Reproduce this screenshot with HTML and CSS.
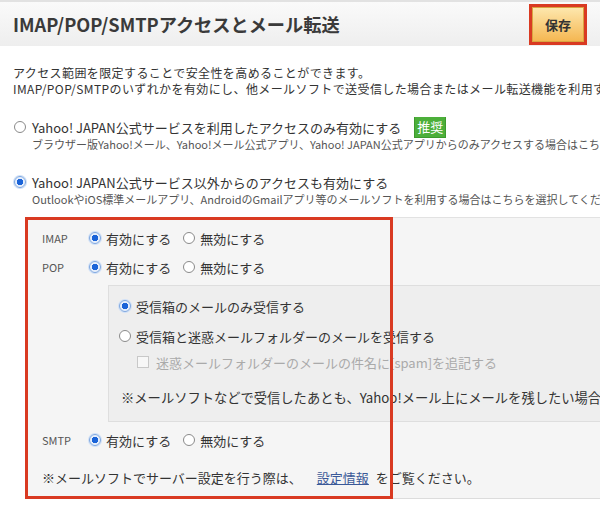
FILE: index.html
```html
<!DOCTYPE html>
<html lang="ja">
<head>
<meta charset="utf-8">
<title>IMAP/POP/SMTPアクセスとメール転送</title>
<link rel="stylesheet" href="styles.css">
</head>
<body>
<div class="page">
  <header class="head">
    <h1 class="title">IMAP/POP/SMTPアクセスとメール転送</h1>
    <button class="save">保存</button>
  </header>

  <p class="intro">アクセス範囲を限定することで安全性を高めることができます。<br>IMAP/POP/SMTPのいずれかを有効にし、他メールソフトで送受信した場合またはメール転送機能を利用する場合</p>

  <div class="opt opt1">
    <div class="opt-main"><span class="radio"></span><span>Yahoo! JAPAN公式サービスを利用したアクセスのみ有効にする</span><span class="badge">推奨</span></div>
    <div class="opt-sub">ブラウザー版Yahoo!メール、Yahoo!メール公式アプリ、Yahoo! JAPAN公式アプリからのみアクセスする場合はこちら</div>
  </div>

  <div class="opt opt2">
    <div class="opt-main"><span class="radio on"></span><span>Yahoo! JAPAN公式サービス以外からのアクセスも有効にする</span></div>
    <div class="opt-sub">OutlookやiOS標準メールアプリ、AndroidのGmailアプリ等のメールソフトを利用する場合はこちらを選択してください。</div>
  </div>

  <section class="panel">
    <div class="row"><span class="lbl">IMAP</span><span class="radio on"></span><span class="rtext">有効にする</span><span class="radio"></span><span class="rtext">無効にする</span></div>
    <div class="row row-pop"><span class="lbl">POP</span><span class="radio on"></span><span class="rtext">有効にする</span><span class="radio"></span><span class="rtext">無効にする</span></div>

    <div class="inner">
      <div class="irow"><span class="radio on"></span><span class="rtext">受信箱のメールのみ受信する</span></div>
      <div class="irow irow2"><span class="radio"></span><span class="rtext">受信箱と迷惑メールフォルダーのメールを受信する</span></div>
      <div class="irow cbrow"><span class="check"></span><span class="dim">迷惑メールフォルダーのメールの件名に[spam]を追記する</span></div>
      <div class="inote">※メールソフトなどで受信したあとも、Yahoo!メール上にメールを残したい場合は</div>
    </div>

    <div class="row row-smtp"><span class="lbl">SMTP</span><span class="radio on"></span><span class="rtext">有効にする</span><span class="radio"></span><span class="rtext">無効にする</span></div>

    <p class="note">※メールソフトでサーバー設定を行う際は、 <a class="link" href="#">設定情報</a> をご覧ください。</p>

    <div class="mark"></div>
  </section>
</div>
</body>
</html>
```

FILE: styles.css
```css
html, body {
  margin: 0;
  padding: 0;
  background: #fff;
}
body {
  font-family: "Noto Sans CJK JP", "Noto Sans", sans-serif;
  color: #333;
  width: 600px;
  height: 511px;
  overflow: hidden;
}
.page {
  position: relative;
  width: 600px;
}
.head {
  height: 44px;
  border-top: 2px solid #e2e2e2;
  background: linear-gradient(#fafafa, #eeeeee);
  display: flex;
  align-items: center;
  justify-content: space-between;
  padding: 0 16px 0 13px;
}
.title {
  margin: 0;
  font-size: 18.2px;
  font-weight: bold;
  color: #3a3a3a;
  letter-spacing: 0;
}
.save {
  width: 52px;
  height: 35px;
  border: 1px solid #d9a441;
  background: linear-gradient(#fde7ad, #f5b752);
  font-family: inherit;
  font-size: 13px;
  font-weight: bold;
  color: #333;
  outline: 3px solid #d93a22;
  outline-offset: 0;
  padding: 0;
  margin-top: 1px;
}
.intro {
  margin: 19px 0 0;
  padding: 0 13px;
  font-size: 12px;
  letter-spacing: 0.4px;
  line-height: 16px;
  white-space: nowrap;
  overflow: hidden;
  color: #333;
}
.opt {
  padding-left: 14px;
  white-space: nowrap;
  overflow: hidden;
}
.opt1 { margin-top: 20px; }
.opt2 { margin-top: 21px; }
.opt-main {
  display: flex;
  align-items: center;
  height: 20px;
  font-size: 13px;
  color: #333;
}
.opt-main .radio { margin-right: 6px; }
.opt-sub {
  padding-left: 18px;
  font-size: 11px;
  line-height: 14px;
  color: #555;
}
.badge {
  display: inline-block;
  margin-left: 13px;
  background: #4caf3a;
  color: #fff;
  font-size: 13px;
  line-height: 20px;
  height: 20px;
  padding: 0 2px;
  border: 1px solid #3d9a2d;
}
.radio {
  display: inline-block;
  box-sizing: border-box;
  width: 12px;
  height: 12px;
  border-radius: 50%;
  border: 1px solid #8a8a8a;
  background: #fff;
  flex: none;
}
.radio.on {
  border: 1px solid #7ea7e0;
  background: radial-gradient(circle, #1b64d8 0 3px, #e7effb 3.5px);
  box-shadow: 0 0 0 1px #cfe0f7;
}
.panel {
  position: relative;
  margin: 11px 0 0 26px;
  background: #f5f5f5;
  border-top: 1px solid #e2e2e2;
  border-bottom: 1px solid #dcdcdc;
  padding: 10px 0 10px 16px;
}
.row {
  display: flex;
  align-items: center;
  height: 20px;
  font-size: 13px;
}
.row-pop { margin-top: 9px; }
.row-smtp { margin-top: 8px; }
.lbl {
  width: 47px;
  font-size: 11px;
  color: #555;
}
.rtext {
  margin-left: 5px;
  margin-right: 12px;
  color: #333;
  white-space: nowrap;
}
.inner {
  margin: 8px 0 0 66px;
  background: #eeeeee;
  border: 1px solid #dedede;
  border-right: none;
  padding: 10px 0 13px 10px;
  white-space: nowrap;
  overflow: hidden;
}
.irow {
  display: flex;
  align-items: center;
  height: 20px;
  font-size: 13px;
}
.irow2 { margin-top: 10px; }
.cbrow { margin-top: 6px; padding-left: 18px; }
.check {
  display: inline-block;
  box-sizing: border-box;
  width: 12px;
  height: 12px;
  border: 1px solid #c8c8c8;
  background: #f7f7f7;
  margin-right: 7px;
}
.dim {
  color: #aaa;
}
.inote {
  margin-top: 16px;
  padding-left: 2px;
  font-size: 13.3px;
  line-height: 20px;
  color: #333;
}
.note {
  margin: 18px 0 0;
  font-size: 13px;
  line-height: 20px;
  color: #333;
  white-space: nowrap;
}
.link {
  color: #3b5998;
  text-decoration: underline;
  margin: 0 4px 0 12px;
}
.mark {
  position: absolute;
  left: -1px;
  top: -1px;
  width: 362px;
  height: 276px;
  border: 3px solid #d93a22;
  pointer-events: none;
}
```
